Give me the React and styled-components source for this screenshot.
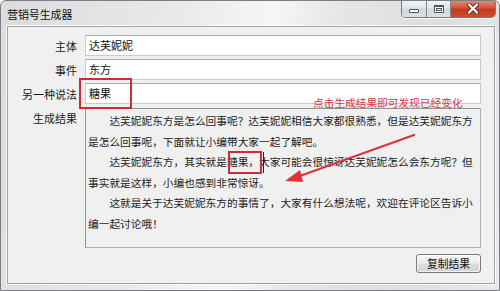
import React from "react";
import styled, { createGlobalStyle } from "styled-components";

const Global = createGlobalStyle`
  html, body { margin: 0; padding: 0; background: #fff; }
  body { font-family: "Noto Sans CJK SC", "Microsoft YaHei", "DejaVu Sans", sans-serif; }
  * { box-sizing: border-box; }
`;

const Window = styled.div`
  position: relative;
  width: 500px;
  height: 291px;
  border: 1px solid #7b7f85;
  border-radius: 6px 6px 0 0;
  background: linear-gradient(100deg, #dcdcdc 0%, #e8e8e8 30%, #f6f6f6 50%, #e6e6e6 62%, #dedede 80%, #e9e9e9 100%);
  display: flex;
  flex-direction: column;
  padding: 0 4px 6px 6px;
  overflow: hidden;
`;

const TitleBar = styled.div`
  height: 25px;
  display: flex;
  align-items: flex-start;
`;

const Title = styled.div`
  font-size: 11px;
  line-height: 13px;
  color: #111;
  margin-top: 7px;
  letter-spacing: -0.1px;
`;

const CaptionGroup = styled.div`
  margin-left: auto;
  margin-right: -1px;
  margin-top: -1px;
  display: flex;
  height: 18px;
  border: 1px solid #727b86;
  border-top: none;
  border-radius: 0 0 5px 5px;
  overflow: hidden;
  box-shadow: 0 1px 0 rgba(255,255,255,0.8);
`;

const CapBtn = styled.div`
  width: ${(p) => p.$w}px;
  height: 100%;
  display: flex;
  align-items: center;
  justify-content: center;
  background: ${(p) =>
    p.$close
      ? "linear-gradient(#e6927f 0%, #d4553b 45%, #c23a1f 55%, #cf4a2e 100%)"
      : "linear-gradient(#f4f5f7 0%, #e3e6ea 45%, #d3d8de 55%, #dde1e6 100%)"};
  border-left: ${(p) => (p.$first ? "none" : "1px solid #7d8691")};
`;

const MinIcon = styled.div`
  width: 10px;
  height: 4px;
  margin-top: 4px;
  border: 1px solid #4a5360;
  background: #fff;
  border-radius: 1px;
`;

const MaxIcon = styled.div`
  width: 10px;
  height: 8px;
  border: 1px solid #4a5360;
  border-top-width: 2px;
  background: #fff;
  box-shadow: inset 0 0 0 1px #fff, inset 0 0 0 2px #4a5360;
  border-radius: 1px;
`;

const Client = styled.div`
  position: relative;
  flex: 1;
  background: #f0f0f0;
  border: 1px solid #a3a3a3;
  box-shadow: 0 0 0 1px rgba(255, 255, 255, 0.75);
  display: grid;
  grid-template-columns: 69px 1fr;
  column-gap: 8px;
  row-gap: 3px;
  grid-template-rows: 21px 21px 21px 140px 19px;
  align-content: start;
  padding: 8px 13px 0 0;
`;

const Label = styled.div`
  font-size: 11px;
  line-height: 14px;
  color: #1a1a1a;
  text-align: right;
  align-self: ${(p) => (p.$top ? "start" : "center")};
  padding-top: ${(p) => (p.$top ? "3px" : "0")};
  margin-top: ${(p) => (p.$gap ? `${p.$gap}px` : "0")};
  white-space: nowrap;
`;

const Input = styled.div`
  background: #fff;
  border: 1px solid #c9cbcf;
  border-top-color: #abadb3;
  font-size: 11px;
  line-height: 19px;
  color: #111;
  padding-left: 3px;
`;

const ResultBox = styled.div`
  margin-top: 1px;
  height: 140px;
  background: #f0f0f0;
  border: 1px solid #929292;
  border-right-color: #b0b0b0;
  border-bottom-color: #b0b0b0;
  padding: 2px 0 0 2px;
  font-size: 10.7px;
  line-height: 20.6px;
  color: #1c1c1c;
  overflow: hidden;
`;

const Line = styled.div`
  white-space: nowrap;
  padding-left: ${(p) => (p.$indent ? "2em" : "0")};
`;

const CopyButton = styled.div`
  grid-column: 2;
  justify-self: end;
  margin-top: 4px;
  width: 65px;
  height: 19px;
  border: 1px solid #7a7a7a;
  border-radius: 3px;
  background: linear-gradient(#f6f6f6 0%, #ebebeb 48%, #dcdcdc 52%, #d4d4d4 100%);
  box-shadow: inset 0 0 0 1px rgba(255, 255, 255, 0.7);
  font-size: 10.8px;
  line-height: 17px;
  text-align: center;
  color: #111;
`;

const RedBox = styled.div`
  position: absolute;
  left: ${(p) => p.$x}px;
  top: ${(p) => p.$y}px;
  width: ${(p) => p.$w}px;
  height: ${(p) => p.$h}px;
  border: 2px solid #d42a38;
  pointer-events: none;
`;

const Note = styled.div`
  position: absolute;
  left: 312px;
  top: 95px;
  font-size: 10.7px;
  line-height: 14px;
  color: #d43845;
  white-space: nowrap;
`;

const Caret = styled.div`
  position: absolute;
  left: 262px;
  top: 151px;
  width: 1px;
  height: 21px;
  background: #222;
`;

const ArrowSvg = styled.svg`
  position: absolute;
  left: 0;
  top: 0;
  pointer-events: none;
`;

const lines = [
  { t: "达芙妮妮东方是怎么回事呢？达芙妮妮相信大家都很熟悉，但是达芙妮妮东方", i: true },
  { t: "是怎么回事呢，下面就让小编带大家一起了解吧。" },
  { t: "达芙妮妮东方，其实就是糖果，大家可能会很惊讶达芙妮妮怎么会东方呢？但", i: true },
  { t: "事实就是这样，小编也感到非常惊讶。" },
  { t: "这就是关于达芙妮妮东方的事情了，大家有什么想法呢，欢迎在评论区告诉小", i: true },
  { t: "编一起讨论哦！" },
];

export default function App() {
  return (
    <>
      <Global />
      <Window>
        <TitleBar>
          <Title>营销号生成器</Title>
          <CaptionGroup>
            <CapBtn $w={24} $first>
              <MinIcon />
            </CapBtn>
            <CapBtn $w={24}>
              <MaxIcon />
            </CapBtn>
            <CapBtn $w={45} $close>
              <svg width="14" height="11" viewBox="0 0 14 11">
                <path d="M3 1.5 L11 9.5 M11 1.5 L3 9.5" stroke="#6b2a20" strokeWidth="4" strokeLinecap="round" />
                <path d="M3 1.5 L11 9.5 M11 1.5 L3 9.5" stroke="#ffffff" strokeWidth="2.2" strokeLinecap="round" />
              </svg>
            </CapBtn>
          </CaptionGroup>
        </TitleBar>
        <Client>
          <Label>主体</Label>
          <Input>达芙妮妮</Input>
          <Label>事件</Label>
          <Input>东方</Input>
          <Label>另一种说法</Label>
          <Input>糖果</Input>
          <Label $top $gap={1}>生成结果</Label>
          <ResultBox>
            {lines.map((l, k) => (
              <Line key={k} $indent={l.i}>
                {l.t}
              </Line>
            ))}
          </ResultBox>
          <CopyButton>复制结果</CopyButton>
        </Client>

        <RedBox $x={78} $y={77} $w={53} $h={31} />
        <RedBox $x={227} $y={150} $w={34} $h={23} />
        <Caret />
        <Note>点击生成结果即可发现已经变化</Note>
        <ArrowSvg width="500" height="291" viewBox="0 0 500 291">
          <line x1="413" y1="134" x2="296" y2="176" stroke="#e0323c" strokeWidth="2.2" strokeLinecap="round" />
          <polygon points="284,180 299,169 302,181" fill="#e0323c" />
        </ArrowSvg>
      </Window>
    </>
  );
}
